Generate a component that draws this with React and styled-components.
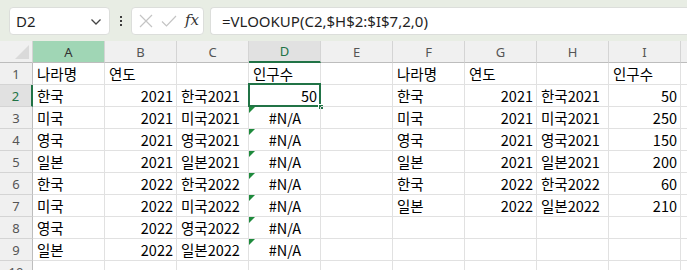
import styled, { createGlobalStyle, css } from 'styled-components'

const GlobalStyle = createGlobalStyle`
  * { box-sizing: border-box; }
  html, body { margin: 0; padding: 0; background: #ffffff; overflow: hidden; }
  body { font-family: "Noto Sans", "Noto Sans CJK KR", sans-serif; }
`

const COLS = ['A', 'B', 'C', 'D', 'E', 'F', 'G', 'H', 'I', 'J']

const leftRows = [
  ['한국', 2021],
  ['미국', 2021],
  ['영국', 2021],
  ['일본', 2021],
  ['한국', 2022],
  ['미국', 2022],
  ['영국', 2022],
  ['일본', 2022],
]

const lookup = [
  ['한국', 2021, 50],
  ['미국', 2021, 250],
  ['영국', 2021, 150],
  ['일본', 2021, 200],
  ['한국', 2022, 60],
  ['일본', 2022, 210],
]

// builds one row of cells: [{ v, align, error, active }]
const buildRow = (r) => {
  const cells = Array(10).fill(null).map(() => ({ v: '' }))
  if (r === 1) {
    cells[0] = { v: '나라명' }
    cells[1] = { v: '연도' }
    cells[3] = { v: '인구수' }
    cells[5] = { v: '나라명' }
    cells[6] = { v: '연도' }
    cells[8] = { v: '인구수' }
    return cells
  }
  const left = leftRows[r - 2]
  if (left) {
    cells[0] = { v: left[0] }
    cells[1] = { v: left[1], align: 'right' }
    cells[2] = { v: `${left[0]}${left[1]}` }
    cells[3] = r === 2
      ? { v: 50, align: 'right', active: true }
      : { v: '#N/A', align: 'center', error: true }
  }
  const right = lookup[r - 2]
  if (right) {
    cells[5] = { v: right[0] }
    cells[6] = { v: right[1], align: 'right' }
    cells[7] = { v: `${right[0]}${right[1]}` }
    cells[8] = { v: right[2], align: 'right' }
  }
  return cells
}

const App = () => {
  const rows = Array.from({ length: 10 }, (_, i) => i + 1)

  return (
    <Page>
      <GlobalStyle />
      <Toolbar>
        <NameBox>
          <span>D2</span>
          <svg width="12" height="8" viewBox="0 0 12 8">
            <path d="M1.5 1.5 L6 6 L10.5 1.5" fill="none" stroke="#444" strokeWidth="1.3" />
          </svg>
        </NameBox>
        <Dots>
          <i />
          <i />
          <i />
        </Dots>
        <FormulaButtons>
          <svg width="16" height="16" viewBox="0 0 16 16">
            <path d="M2 2 L14 14 M14 2 L2 14" stroke="#c4c4c4" strokeWidth="1.2" fill="none" />
          </svg>
          <svg width="18" height="16" viewBox="0 0 18 16">
            <path d="M2 8.5 L6.5 13 L16 3" stroke="#c4c4c4" strokeWidth="1.2" fill="none" />
          </svg>
          <Fx>fx</Fx>
        </FormulaButtons>
        <FormulaInput>=VLOOKUP(C2,$H$2:$I$7,2,0)</FormulaInput>
      </Toolbar>

      <Sheet>
        <Corner>
          <svg width="14" height="14" viewBox="0 0 14 14">
            <path d="M14 0 L14 14 L0 14 Z" fill="#dadada" />
          </svg>
        </Corner>
        {COLS.map(c => (
          <ColHeader key={c} $state={c === 'A' ? 'hover' : c === 'D' ? 'active' : null}>
            {c}
          </ColHeader>
        ))}

        {rows.map(r => (
          <Row key={r} r={r} />
        ))}
      </Sheet>
    </Page>
  )
}

const Row = ({ r }) => {
  const cells = buildRow(r)
  return (
    <>
      <RowHeader $active={r === 2}>{r}</RowHeader>
      {cells.map((cell, i) => (
        <Cell key={i} $align={cell.align}>
          {cell.error && <ErrorMark />}
          {cell.v}
          {cell.active && (
            <Selection>
              <FillHandle />
            </Selection>
          )}
        </Cell>
      ))}
    </>
  )
}

export default App

const Page = styled.div`
  width: 687px;
  height: 270px;
  overflow: hidden;
  background: #ffffff;
`

const Toolbar = styled.div`
  height: 41px;
  background: #e8ede4;
  display: flex;
  align-items: flex-start;
  padding: 7px 0 0 9px;
`

const boxCss = css`
  height: 28px;
  background: #ffffff;
  border: 1px solid #dcdedb;
  border-radius: 4px;
  display: flex;
  align-items: center;
`

const NameBox = styled.div`
  ${boxCss};
  width: 101px;
  padding: 0 7px 0 6px;
  justify-content: space-between;
  font-size: 15px;
  color: #1f1f1f;

  & > svg {
    margin-top: 1px;
  }
`

const Dots = styled.div`
  width: 21px;
  height: 28px;
  display: flex;
  flex-direction: column;
  align-items: center;
  justify-content: center;
  gap: 2px;

  & > i {
    width: 2px;
    height: 2px;
    background: #3c3c3c;
  }
`

const FormulaButtons = styled.div`
  ${boxCss};
  width: 73px;
  padding: 0 4px 0 6px;
  justify-content: space-between;
`

const Fx = styled.span`
  font-family: "DejaVu Serif", "Liberation Serif", serif;
  font-style: italic;
  font-size: 15px;
  color: #333;
  margin-top: -2px;
`

const FormulaInput = styled.div`
  ${boxCss};
  margin-left: 6px;
  flex: 1;
  border-right: none;
  border-radius: 4px 0 0 4px;
  padding-left: 11px;
  font-size: 15px;
  color: #1f1f1f;
  white-space: nowrap;
`

const Sheet = styled.div`
  display: grid;
  width: max-content;
  grid-template-columns: 33px repeat(10, 72px);
  grid-auto-rows: 22px;
`

const headerBase = css`
  background: #f0f0f0;
  color: #555555;
  font-family: "Noto Sans", sans-serif;
  font-size: 13px;
  display: flex;
  align-items: center;
  justify-content: center;
`

const Corner = styled.div`
  ${headerBase};
  border-right: 1px solid #d4d4d4;
  border-bottom: 1px solid #bdbdbd;
  justify-content: flex-end;
  align-items: flex-end;
  padding: 0 3px 3px 0;
`

const ColHeader = styled.div`
  ${headerBase};
  border-right: 1px solid #d4d4d4;
  border-bottom: 1px solid #bdbdbd;

  ${p => p.$state === 'hover' && css`
    background: #a0d6b5;
    color: #333;
  `}

  ${p => p.$state === 'active' && css`
    background: #e1e1e1;
    color: #217346;
    border-bottom: 2px solid #217346;
  `}
`

const RowHeader = styled.div`
  ${headerBase};
  border-right: 1px solid #bdbdbd;
  border-bottom: 1px solid #d4d4d4;

  ${p => p.$active && css`
    background: #e1e1e1;
    color: #217346;
    border-right: 2px solid #217346;
  `}
`

const Cell = styled.div`
  position: relative;
  border-right: 1px solid #e1e1e1;
  border-bottom: 1px solid #e1e1e1;
  font-family: "Noto Sans CJK KR", sans-serif;
  font-size: 14.5px;
  line-height: 21px;
  color: #000000;
  padding: 0 3px 0 4px;
  white-space: nowrap;
  text-align: ${p => p.$align || 'left'};
`

const ErrorMark = styled.span`
  position: absolute;
  top: 0;
  left: 0;
  width: 0;
  height: 0;
  border-top: 6px solid #1e8a3c;
  border-right: 6px solid transparent;
`

const Selection = styled.span`
  position: absolute;
  top: -2px;
  left: -1px;
  right: -1px;
  bottom: -1px;
  border: 2px solid #217346;
  pointer-events: none;
`

const FillHandle = styled.span`
  position: absolute;
  right: -5px;
  bottom: -5px;
  width: 6px;
  height: 6px;
  background: #217346;
  border: 1px solid #ffffff;
`
